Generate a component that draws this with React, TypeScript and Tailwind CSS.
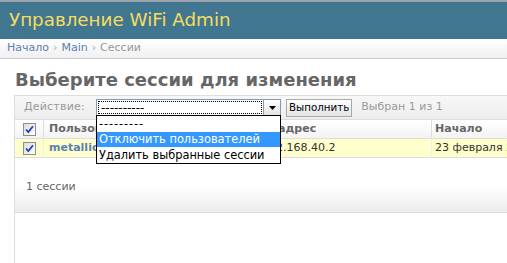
import React from "react";

function Check() {
  return (
    <div className="w-[13px] h-[13px] border border-[#8a8f94] bg-gradient-to-br from-[#dcdcd8] to-white flex items-center justify-center">
      <svg width="9" height="9" viewBox="0 0 9 9">
        <path d="M1 4.5 L3.3 7 L8 1.2" fill="none" stroke="#2140c4" strokeWidth="1.8" />
      </svg>
    </div>
  );
}

export default function App() {
  return (
    <div className="w-[507px] h-[263px] overflow-hidden bg-white font-['DejaVu_Sans',sans-serif] flex flex-col">
      <div className="border-t-2 border-[#9ba3aa] h-[39px] bg-[#417690] flex items-center pl-[9px] shrink-0">
        <span className="text-[18.3px] text-[#f5dd5d] leading-none">Управление WiFi Admin</span>
      </div>
      <div className="h-[20px] shrink-0 bg-gradient-to-b from-white to-[#f0f0f0] border-b border-[#cccccc] flex items-center pl-[7px] text-[11px] text-[#999]">
        <span className="text-[#5b80b2]">Начало</span>
        <span className="mx-[4px] text-[#aaa]">›</span>
        <span className="text-[#5b80b2]">Main</span>
        <span className="mx-[4px] text-[#aaa]">›</span>
        <span className="text-[#999]">Сессии</span>
      </div>
      <div className="flex-1 flex flex-col pl-[14px] pt-[10px]">
        <h1 className="text-[18px] font-bold text-[#666] leading-[22px] pl-[1px] mb-[4px] whitespace-nowrap">Выберите сессии для изменения</h1>
        <div className="flex-1 border-l border-t border-[#ddd] flex flex-col min-w-[600px]">
          <div className="relative h-[23px] bg-gradient-to-b from-[#f8f8f8] to-[#ededed] flex items-center pl-[9px] text-[11px] text-[#999]">
            <span className="tracking-[0.2px] w-[72px]">Действие:</span>
            <div className="relative">
              <div className="w-[185px] h-[17px] bg-white border border-[#7f9db9] flex items-stretch">
                <div className="flex-1 m-[1px] border border-dotted border-black flex items-center pl-[2px] text-[12px] text-black leading-none">
                  ----------
                </div>
                <div className="w-[17px] border-l border-[#9a9a9a] bg-gradient-to-b from-white to-[#e3e3e3] flex items-center justify-center">
                  <svg width="7" height="4" viewBox="0 0 7 4"><path d="M0 0 H7 L3.5 4 Z" fill="#000" /></svg>
                </div>
              </div>
              <div className="absolute left-0 top-[16px] w-[185px] bg-white border border-black z-10 text-[11.4px] text-black">
                <div className="h-[16px] leading-[16px] pl-[2px] tracking-[0.9px]">---------</div>
                <div className="h-[15px] leading-[15px] pl-[2px] bg-[#3399ff] text-white">Отключить пользователей</div>
                <div className="h-[16px] leading-[16px] pl-[2px]">Удалить выбранные сессии</div>
              </div>
            </div>
            <div className="ml-[5px] h-[18px] px-[2px] border border-[#aaa] bg-gradient-to-b from-white to-[#e4e4e4] flex items-center text-[10.3px] text-black">Выполнить</div>
            <span className="ml-[9px] text-[11px] text-[#999]">Выбран 1 из 1</span>
          </div>
          <div className="grid grid-cols-[28px_213px_175px_1fr] h-[19px] border-t border-[#ddd] bg-gradient-to-b from-white to-[#f3f3f3] text-[11px] font-bold text-[#666]">
            <div className="flex items-center pl-[8px]"><Check /></div>
            <div className="border-l border-[#ddd] flex items-center pl-[5px]">Пользователь</div>
            <div className="border-l border-[#ddd] flex items-center pl-[5px]">IP адрес</div>
            <div className="border-l border-[#ddd] flex items-center pl-[3px]">Начало</div>
          </div>
          <div className="grid grid-cols-[28px_213px_175px_1fr] h-[20px] border-t border-b border-[#ddd] bg-[#ffffcc] text-[11px] text-[#333]">
            <div className="flex items-center pl-[8px]"><Check /></div>
            <div className="border-l border-[#eee] flex items-center pl-[5px] font-bold text-[#5b80b2]">metallica</div>
            <div className="border-l border-[#eee] flex items-center pl-[5px]">192.168.40.2</div>
            <div className="border-l border-[#eee] flex items-center pl-[3px] whitespace-nowrap">23 февраля 2012 г. 14:32</div>
          </div>
          <div className="h-[54px] mt-[1px] bg-gradient-to-b from-white via-white to-[#ececec] border-b border-[#ddd] flex items-center pl-[11px] pt-[4px] text-[11px] text-[#666]">
            1 сессии
          </div>
          <div className="flex-1" />
        </div>
      </div>
    </div>
  );
}
